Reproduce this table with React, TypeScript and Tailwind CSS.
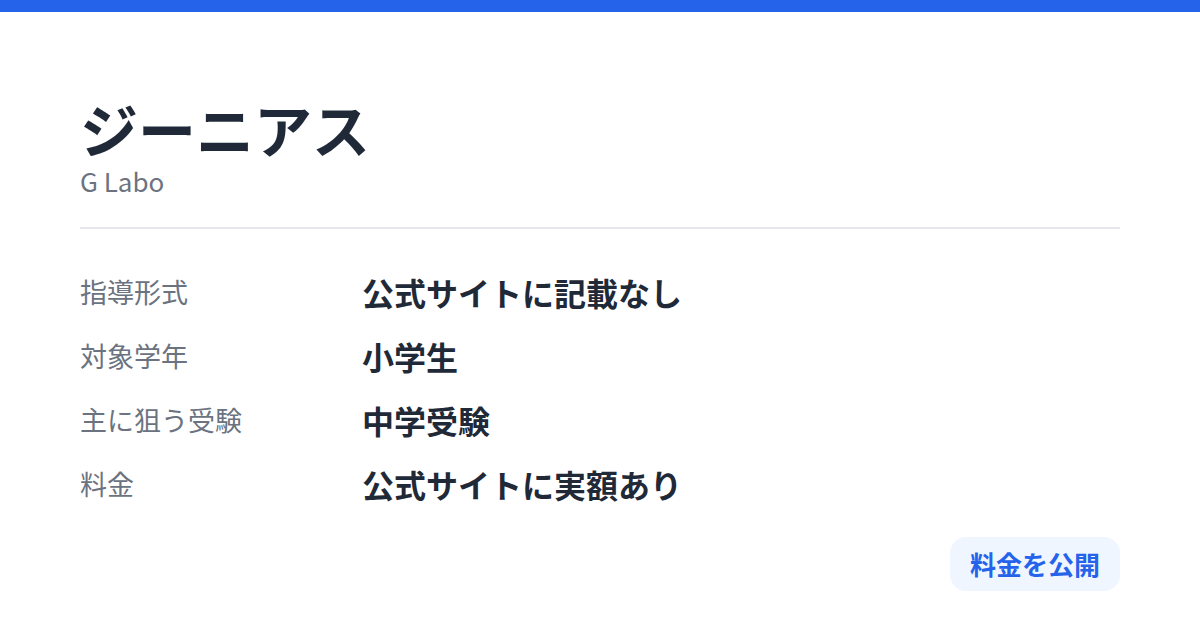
import React from 'react';

const rows = [
  { label: '指導形式', value: '公式サイトに記載なし' },
  { label: '対象学年', value: '小学生' },
  { label: '主に狙う受験', value: '中学受験' },
  { label: '料金', value: '公式サイトに実額あり' },
];

const App: React.FC = () => {
  return (
    <div
      className="w-[1200px] h-[630px] bg-white flex flex-col overflow-hidden"
      style={{ fontFamily: '"Noto Sans CJK JP", "Noto Sans", sans-serif' }}
    >
      {/* Top accent bar */}
      <div className="h-[12px] bg-[#2563eb]" />

      <div className="flex-1 px-[80px] pt-[84px] flex flex-col">
        {/* Heading */}
        <h1 className="text-[58px] leading-[64px] font-bold text-[#1f2937]">ジーニアス</h1>
        <p className="mt-[4px] text-[26px] leading-[34px] text-[#6b7280]">G Labo</p>

        <div className="mt-[29px] border-t-2 border-[#e5e7eb]" />

        {/* Details */}
        <div className="mt-[46px] flex flex-col gap-[30px]">
          {rows.map((row) => (
            <div key={row.label} className="flex items-center">
              <div className="w-[282px] text-[27px] leading-[34px] text-[#6b7280]">{row.label}</div>
              <div className="text-[32px] leading-[34px] font-bold text-[#1f2937]">{row.value}</div>
            </div>
          ))}
        </div>

        <div className="mt-auto mb-[39px] flex justify-end">
          <span className="px-[20px] py-[11px] rounded-[16px] bg-[#eff6ff] text-[#2563eb] text-[26px] leading-[32px] font-bold">
            料金を公開
          </span>
        </div>
      </div>
    </div>
  );
};

export default App;
